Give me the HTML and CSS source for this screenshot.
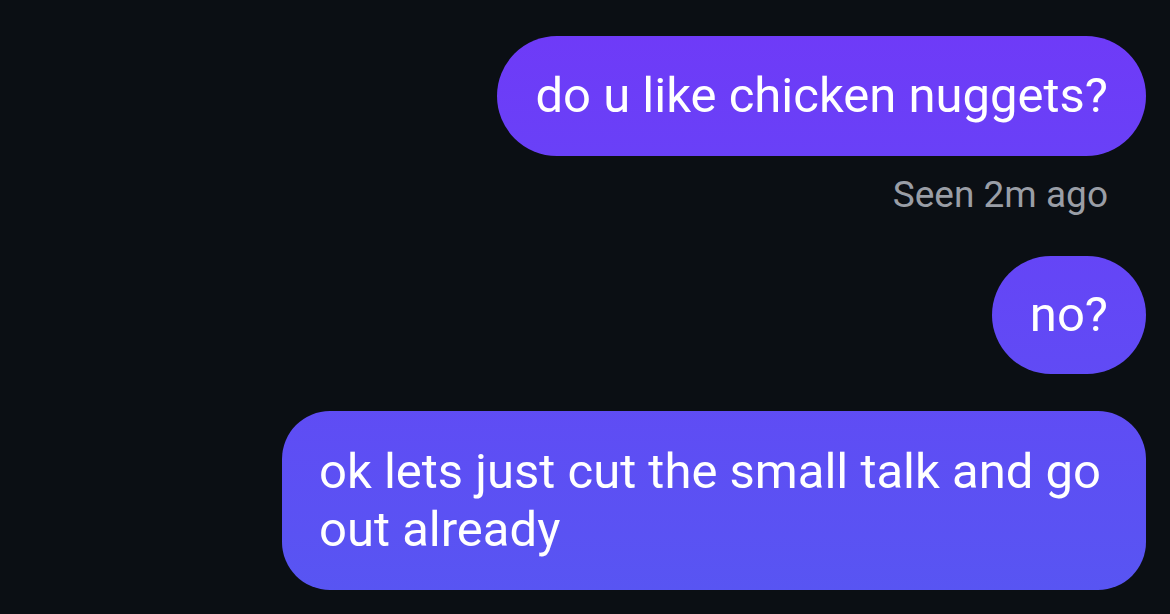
FILE: index.html
```html
<!DOCTYPE html>
<html lang="en">
<head>
    <meta charset="UTF-8">
    <meta name="viewport" content="width=device-width, initial-scale=1.0">
    <title>Messages</title>
    <link rel="stylesheet" href="styles.css">
</head>
<body>
    <div class="thread">
        <div class="bubble">do u like chicken nuggets?</div>
        <div class="status">Seen 2m ago</div>
        <div class="bubble short">no?</div>
        <div class="bubble long">ok lets just cut the small talk and go out already</div>
    </div>
</body>
</html>
```

FILE: styles.css
```css
/* Dark chat thread with sent messages on the right */
body {
    background-color: #0b0f14;
    margin: 0;
    font-family: Roboto, "Noto Sans", sans-serif;
}

.thread {
    display: flex;
    flex-direction: column;
    align-items: flex-end;
    padding: 36px 24px 0 0;
}

.bubble {
    /* gradient is fixed to the screen so each bubble picks up its own shade */
    background: linear-gradient(180deg, #7039f8 0%, #6446f6 45%, #5756f2 100%) fixed;
    color: #fff;
    font-size: 49px;
    line-height: 58px;
    padding: 31px 38px;
    border-radius: 60px;
    max-width: 790px;
    margin-bottom: 37px;
}

.short {
    padding: 30px 38px;
}

.long {
    border-radius: 48px;
    padding: 32px 37px 31px 37px;
}

.status {
    color: #9a9ea6;
    font-size: 37px;
    margin: -20px 38px 40px 0;
}
```
